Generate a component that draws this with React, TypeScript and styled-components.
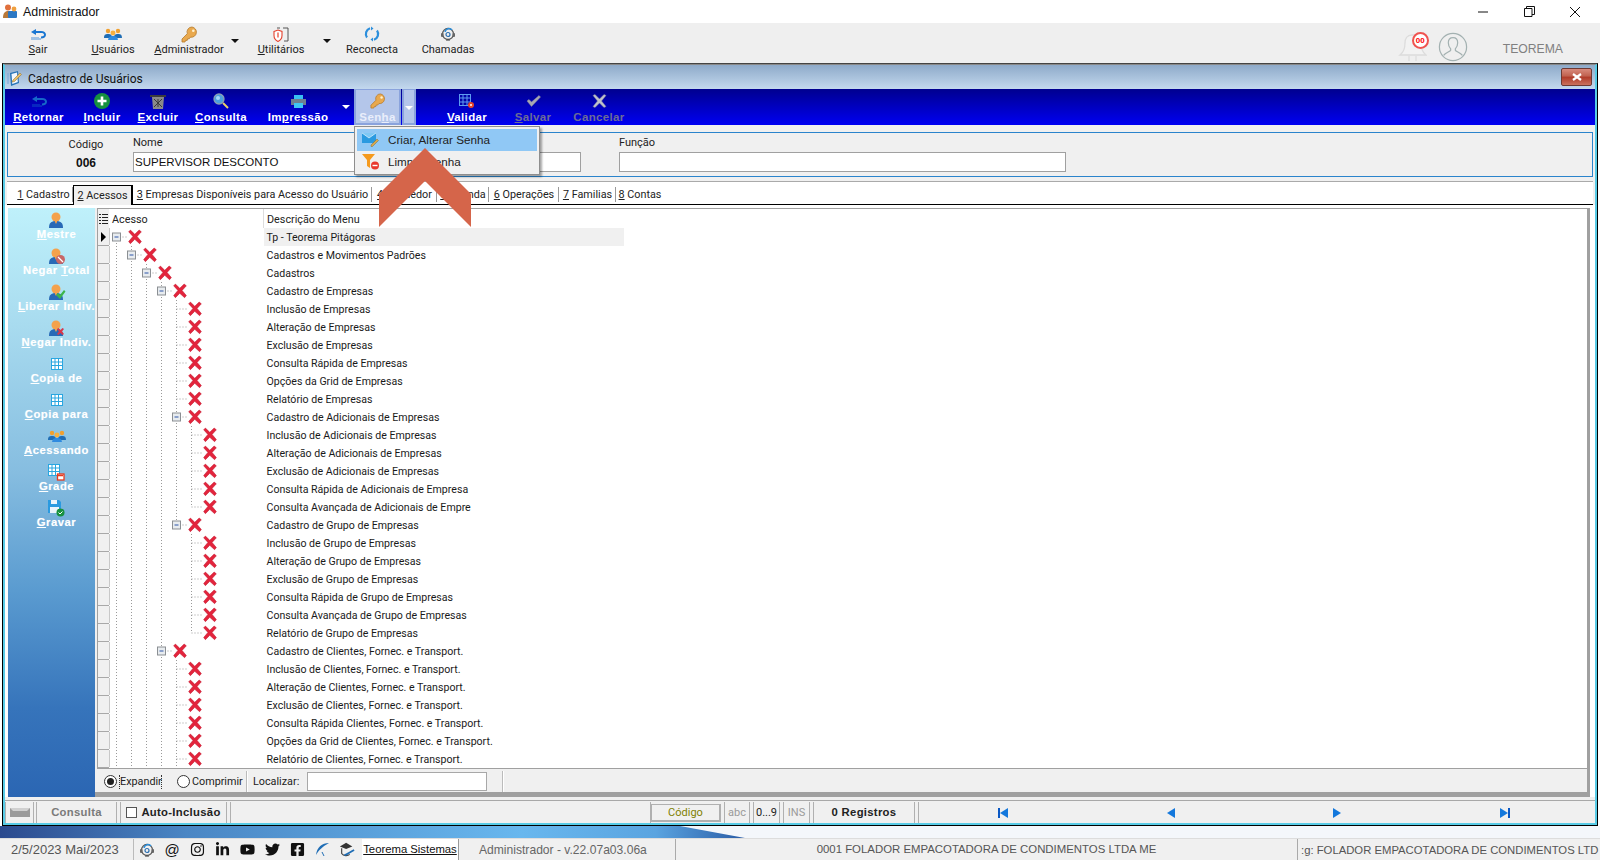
import React from "react";
import styled, { createGlobalStyle } from "styled-components";
import { FaInstagram, FaLinkedinIn, FaYoutube, FaTwitter, FaFacebookSquare } from "react-icons/fa";

const BOLD = `"Liberation Sans", Arial, sans-serif`;

const Global = createGlobalStyle`
  html, body { margin: 0; padding: 0; background: #fff; overflow: hidden; }
  * { box-sizing: border-box; }
  body { font-family: Roboto, "Liberation Sans", Arial, sans-serif; font-size: 11px; color: #111; }
`;

const Page = styled.div`
  position: relative; width: 1600px; height: 860px; overflow: hidden;
  display: flex; flex-direction: column; background: #fff;
`;
const TitleBar = styled.div`
  height: 23px; display: flex; align-items: center; padding-left: 2px; background: #fff; flex: none;
`;
const TitleText = styled.span`margin-left: 5px; font-size: 12.4px; color: #111; font-family: ${BOLD};`;
const WinControls = styled.div`margin-left: auto; display: flex; height: 23px; padding-right: 2px;`;
const WinControl = styled.div`
  width: 46px; display: flex; align-items: center; justify-content: center;
`;
const MenuBar = styled.div`
  height: 40px; flex: none; background: #efefef; display: flex; align-items: stretch;
`;
const MenuBtn = styled.div<{ $w: number }>`
  width: ${p => p.$w}px; display: flex; flex-direction: column; align-items: center;
  padding-top: 2px; font-size: 11px; color: #222; flex: none;
`;
const MenuIcon = styled.div`height: 18px; display: flex; align-items: center; justify-content: center;`;
const MenuLabel = styled.span`margin-top: -1px; line-height: 15px;`;
const Caret = styled.div<{ $w: number; $color?: string }>`
  width: ${p => p.$w}px; flex: none; display: flex; justify-content: center; padding-top: 16px;
  &::after {
    content: ""; width: 0; height: 0;
    border-left: 4px solid transparent; border-right: 4px solid transparent;
    border-top: 4px solid ${p => p.$color || "#111"};
  }
`;
const MenuRight = styled.div`
  margin-left: auto; display: flex; align-items: center; padding-top: 7px; color: #808080; font-size: 12.2px; font-family: ${BOLD};
`;
const BellWrap = styled.div`position: relative; width: 34px; height: 32px; margin-right: 7px;`;
const Badge = styled.div`
  position: absolute; left: 15px; top: 1px; width: 17px; height: 17px; border-radius: 50%;
  border: 2px solid #ef5350; background: #fff; color: #f00; font-size: 8px; font-weight: 700;
  display: flex; align-items: center; justify-content: center; letter-spacing: 0;
`;
const Teorema = styled.span`margin: 5px 37px 0 35px;`;

const Window = styled.div`
  margin: 0 2px; height: 763px; flex: none; display: flex; flex-direction: column;
  border: 1px solid #000; border-top: 1px solid #444; background: #f0f0f0; position: relative;
`;
const WindowInner = styled.div`
  flex: 1; display: flex; flex-direction: column; border: 2px solid #58cbe6; border-top: 1px solid #888;
  min-height: 0;
`;
const Caption = styled.div`
  height: 24px; flex: none; display: flex; align-items: center; padding: 3px 3px 0 2px;
  background: linear-gradient(#8eaac9, #c3d8ee); font-size: 12px; color: #111;
`;
const CaptionText = styled.span`margin-left: 5px;`;
const CloseBtn = styled.div`
  margin-left: auto; width: 31px; height: 18px; border-radius: 2px; border: 1px solid #6e3a34; margin-top: -3px;
  background: linear-gradient(#d88a7c 0, #c0604e 45%, #b03a28 50%, #c9705e 100%);
  display: flex; align-items: center; justify-content: center;
`;
const BlueBar = styled.div`
  height: 36px; flex: none; display: flex; background: linear-gradient(#00008f, #0000f2);
`;
const BlueBtn = styled.div<{ $w: number; $off?: boolean; $active?: boolean }>`
  width: ${p => p.$w}px; flex: none; display: flex; flex-direction: column; align-items: center;
  padding-top: 4px; font-family: ${BOLD}; font-weight: 700; font-size: 11.5px; letter-spacing: 0.35px;
  color: ${p => (p.$active ? "#e9eefb" : p.$off ? "#6c6c96" : "#fff")};
  ${p => p.$active && `background: #b4c6ea; border: 2px solid #8aa3dc; border-top-width:1px; padding-top:3px;`}
  white-space: nowrap;
`;
const BlueIcon = styled.div`height: 16px; display: flex; align-items: center; justify-content: center;`;
const BlueLabel = styled.span`line-height: 15px; margin-top: 1px;`;
const DropBtn = styled.div`
  width: 14px; margin-left: 1px; flex: none; background: #b4c6ea; border: 2px solid #8aa3dc;
  border-top-width: 1px; display: flex; justify-content: center; padding-top: 16px;
  &::after {
    content: ""; width: 0; height: 0;
    border-left: 4px solid transparent; border-right: 4px solid transparent; border-top: 4px solid #fff;
  }
`;
const Gap = styled.div<{ $w: number }>`width: ${p => p.$w}px; flex: none;`;
const Mn = styled.span`text-decoration: underline; text-underline-offset: 1px;`;

const FormPanel = styled.div`
  height: 45px; flex: none; margin: 7px 2px 4px 2px; border: 1px solid #2a84cc; background: #f0f0f0;
  display: flex; position: relative;
`;
const CodeCol = styled.div`
  width: 125px; flex: none; display: flex; flex-direction: column; align-items: center; padding: 3px 0 0 31px;
`;
const CodeLabel = styled.span`line-height: 15px; color: #222; margin-top: 1px;`;
const CodeValue = styled.span`font-family: ${BOLD}; font-weight: 700; font-size: 12px; line-height: 18px; color: #111; margin-top: 2px;`;
const Field = styled.div<{ $w: number; $ml?: number }>`
  width: ${p => p.$w}px; margin-left: ${p => p.$ml || 0}px; flex: none; display: flex; flex-direction: column;
  padding-top: 3px;
`;
const FieldLabel = styled.span`font-size: 11px; line-height: 14px; color: #222;`;
const FieldBox = styled.div`
  height: 20px; margin-top: 2px; border: 1px solid #a0a0a0; background: #fff; padding: 0 1px;
  line-height: 18px; font-size: 11.5px; font-family: ${BOLD}; white-space: nowrap; overflow: hidden; color: #111;
`;
const Tabs = styled.div`
  height: 24px; flex: none; border-top: 1px solid #aaa; background: #fff; margin: 0 2px;
  display: flex; align-items: stretch; border-bottom: 1px solid #000; padding-left: 7px; padding-top: 3px;
`;
const Tab = styled.div<{ $w: number; $active?: boolean; $sep?: boolean }>`
  width: ${p => p.$w}px; flex: none; white-space: nowrap; text-align: center; line-height: 20px; color: #222; font-size: 10.8px;
  ${p => p.$active && `border: 1px solid #000; border-width: 1px 2px 0 1px; background: #f0f0f0; margin-bottom: -1px;`}
  ${p => p.$sep && `position: relative; &::after { content: ""; position: absolute; right: 0; top: 2px; height: 15px; width: 1px; background: #999; }`}
`;
const Main = styled.div`
  height: 592px; flex: none; display: flex; padding: 3px 0 0 3px; background: #fff;
`;
const Sidebar = styled.div`
  width: 87px; flex: none; height: 589px; display: flex; flex-direction: column; padding: 4px 0 0 10px;
  background: linear-gradient(#bff1fb 0, #a8dbef 20%, #86bde0 45%, #5a9bd0 65%, #3674bb 85%, #2b66b3 100%);
`;
const SideBtn = styled.div`
  height: 36px; flex: none; display: flex; flex-direction: column; align-items: center;
  color: #fff; font-family: ${BOLD}; font-weight: 700; font-size: 11.3px; letter-spacing: 0.5px; white-space: nowrap;
  text-shadow: 0 0 1px rgba(255,255,255,.4);
`;
const SideIcon = styled.div`height: 16px; display: flex; align-items: center; justify-content: center;`;
const SideLabel = styled.span`line-height: 15px; margin-top: -1px;`;
const RightCol = styled.div`
  width: 1495px; flex: none; display: flex; flex-direction: column; height: 589px;
  border-right: 3px solid #a0a0a0; border-bottom: 5px solid #a0a0a0; background: #f0f0f0;
`;
const GridBox = styled.div`
  height: 561px; flex: none; margin-left: 2px; background: #fff; display: flex; flex-direction: column;
  border-top: 1px solid #a0a0a0; border-left: 1px solid #a0a0a0; border-bottom: 1px solid #a0a0a0; overflow: hidden;
`;
const GridHead = styled.div`height: 19px; flex: none; display: flex;`;
const HeadCorner = styled.div`
  width: 11px; flex: none; background: #f0f0f0; display: flex; align-items: center; justify-content: center;
`;
const HeadCell = styled.div<{ $w?: number }>`
  ${p => (p.$w ? `width:${p.$w}px;flex:none;` : "flex:1;")} padding-left: 3px; line-height: 21px; color: #222; font-size: 10.8px;
  border-right: ${p => (p.$w ? "1px solid #ddd" : "0")};
`;
const Row = styled.div`height: 18px; flex: none; display: flex;`;
const RowHead = styled.div`
  width: 11px; flex: none; background: #f0f0f0; border-bottom: 1px solid #a8a8a8; display: flex;
  align-items: center; justify-content: center; position: relative;
  &::after { content: ""; position: absolute; right: -1px; top: 0; bottom: 0; width: 1px; background: #c8c8c8; }
`;
const RowArrow = styled.div`
  width: 0; height: 0; border-top: 5px solid transparent; border-bottom: 5px solid transparent;
  border-left: 5px solid #000;
`;
const TreeCell = styled.div`width: 155px; flex: none; height: 18px;`;
const Desc = styled.div<{ $current?: boolean }>`
  width: 360px; flex: none; padding-left: 2.5px; line-height: 19px; white-space: nowrap; overflow: hidden; color: #1a1a1a; font-size: 10.6px;
  background: ${p => (p.$current ? "#f0f0f0" : "transparent")};
`;
const BottomBar = styled.div`
  height: 23px; flex: none; margin-left: 2px; padding-top: 2px; display: flex; align-items: center; font-size: 10.8px; color: #222;
`;
const Radio = styled.div<{ $on?: boolean; $ml: number }>`
  width: 13px; height: 13px; border-radius: 50%; border: 1px solid #333; background: #fff; margin-left: ${p => p.$ml}px;
  display: flex; align-items: center; justify-content: center; flex: none;
  &::after { content: ""; width: 7px; height: 7px; border-radius: 50%; background: ${p => (p.$on ? "#222" : "transparent")}; }
`;
const RadioText = styled.span<{ $focus?: boolean; $w: number }>`
  width: ${p => p.$w}px; flex: none; margin-left: 2px; line-height: 14px; white-space: nowrap; text-align: center;
  ${p => p.$focus && `border-left: 1px dotted #333; border-right: 1px dotted #333;`}
`;
const VSep = styled.div<{ $ml: number }>`margin-left: ${p => p.$ml}px; width: 2px; height: 21px; background: #fff; border-left: 1px solid #bbb; flex: none;`;
const FindLabel = styled.span`margin-left: 5px; width: 54px; flex: none;`;
const FindBox = styled.div`width: 180px; height: 19px; border: 1px solid #a8a8a8; background: #fff; flex: none;`;
const Status = styled.div`
  flex: 1; display: flex; align-items: stretch; margin-top: 3px; border-top: 1px solid #a8a8a8; padding-top: 1px;
  min-height: 0;
`;
const SBox = styled.div<{ $w: number; $ml?: number }>`
  width: ${p => p.$w}px; margin-left: ${p => p.$ml ?? 3}px; flex: none; display: flex; align-items: center; justify-content: center;
  border-left: 1px solid #b0b0b0; border-right: 1px solid #b0b0b0; font-size: 11px; white-space: nowrap; padding-bottom: 1px;
`;
const SText = styled.span<{ $color?: string; $bold?: boolean }>`
  color: ${p => p.$color || "#222"}; font-weight: ${p => (p.$bold ? 700 : 400)};
  ${p => p.$bold && `letter-spacing: .3px; font-family: ${BOLD}; font-size: 11.3px;`}
`;
const CodeBtn = styled.div`
  width: 70px; flex: none; height: 18px; align-self: center; border: 1px solid #b0b0b0;
  text-align: center; line-height: 16px; color: #808000; border-width: 1px 2px 2px 1px; font-size: 11px;
`;
const SmallCheck = styled.div`width: 11px; height: 11px; border: 1px solid #555; background: #fff; margin-right: 4px; flex: none;`;
const NavCell = styled.div`flex: 1; display: flex; justify-content: center; align-items: center;`;
const NavWrap = styled.div`flex: 1; margin: 0 6px 0 3px; display: flex; border-left: 1px solid #b0b0b0;`;

const Desktop = styled.div`height: 12px; flex: none; background: #f4f7fb; position: relative; overflow: hidden;`;
const DeskWave = styled.div`
  position: absolute; inset: 0; width: 745px;
  background: linear-gradient(90deg, #2b4a8e 0, #4a86c4 25%, #68b7ee 70%, #5aa4e0 88%, #2a5ca6 100%);
  clip-path: polygon(0 0, 680px 0, 745px 12px, 0 12px);
`;
const TaskBar = styled.div`
  height: 22px; flex: none; background: #f0f0f0; display: flex; align-items: center; color: #444;
  font-family: ${BOLD}; border-top: 1px solid #ddd; white-space: nowrap; overflow: hidden;
`;
const TaskDate = styled.span`margin-left: 11px; width: 122px; flex: none; color: #555; font-size: 13px;`;
const TaskIcons = styled.div`display: flex; align-items: center; width: 229px; flex: none; border-left: 1px solid #bbb; height: 22px; padding-left: 5px; gap: 9px;`;
const Ico = styled.div`width: 16px; height: 16px; display: flex; align-items: center; justify-content: center; color: #111; flex: none; font-size: 15px;`;
const TaskLink = styled.span`
  width: 97px; flex: none; font-size: 11.3px; color: #111; text-decoration: underline; text-align: center;
  background: #fff; border-right: 1px solid #999; line-height: 21px;
`;
const TaskAdmin = styled.span`margin-left: 20px; width: 196px; flex: none; color: #666; font-size: 12.1px;`;
const TaskCompany = styled.span`width: 623px; flex: none; text-align: center; border-left: 1px solid #aaa; border-right: 1px solid #aaa; line-height: 21px; color: #555; font-size: 11.4px;`;
const TaskSeg = styled.span`margin-left: 3px; color: #555; font-size: 11.3px;`;

const MenuPop = styled.div`
  position: absolute; left: 354px; top: 126px; width: 186px; height: 49px; background: #f0f0f0;
  border: 1px solid #8e8e8e; box-shadow: 2px 2px 2px rgba(0,0,0,.35); padding: 2px; z-index: 5;
  display: flex; flex-direction: column;
`;
const PopItem = styled.div<{ $sel?: boolean }>`
  height: 22px; flex: none; display: flex; align-items: center; font-size: 11.7px; color: #222; padding: 0 0 1px 5px;
  font-family: ${BOLD};
  background: ${p => (p.$sel ? "#90c8f5" : "transparent")};
`;
const PopIcon = styled.div`width: 26px; flex: none; display: flex; align-items: center;`;
const Chevron = styled.svg`position: absolute; left: 379px; top: 148px; z-index: 6;`;

/* ---------- icons ---------- */
const Logo = () => (
  <svg width="16" height="16" viewBox="0 0 16 16">
    <circle cx="6" cy="3.5" r="3" fill="#e0703c" /><path d="M1 14c0-5 2-7 5-7s4 2 4 3l-2 4z" fill="#b9793a" />
    <rect x="6" y="7" width="9" height="7" rx="1" fill="#2c78c4" /><circle cx="12" cy="5" r="2.4" fill="#f0a040" />
  </svg>
);
const Back = ({ c = "#1976d2" }: { c?: string }) => (
  <svg width="16" height="13" viewBox="0 0 16 13">
    <path d="M6 1 1 4l5 3V5h5c2 0 3 .6 3 1.8S13 8.5 11 8.5v2c3 0 5-1.400 5-3.700C16 4.500 14 3 11 3H6z" fill={c} />
    <path d="M2 9v3M4 9v3M6 9v3M8 9v3M10 10v2" stroke={c} strokeWidth="1" opacity=".75" />
  </svg>
);
const Users = ({ w = 18 }: { w?: number }) => (
  <svg width={w} height={w * 0.72} viewBox="0 0 18 13">
    <circle cx="4" cy="3" r="2.200" fill="#f0a030" /><circle cx="14" cy="3" r="2.200" fill="#f0a030" />
    <path d="M0 10c0-3 1-4 4-4s4 1 4 4zM10 10c0-3 1-4 4-4s4 1 4 4z" fill="#1f6db5" />
    <circle cx="9" cy="5" r="2.500" fill="#f6b040" /><path d="M4 13c0-4 2-5 5-5s5 1 5 5z" fill="#2f8be0" />
  </svg>
);
const Key = ({ s = 17 }: { s?: number }) => (
  <svg width={s} height={s} viewBox="0 0 17 17">
    <path d="M11 1a5 5 0 0 0-4.700 6.700L1 13v3h3l.6-1.600h1.600l.4-1.600h1.600l1.300-1.600A5 5 0 1 0 11 1z" fill="#e9a94e" stroke="#b57a2a" strokeWidth=".8" />
    <circle cx="12.300" cy="4.700" r="1.300" fill="#fff2d0" />
  </svg>
);
const Shield = () => (
  <svg width="18" height="15" viewBox="0 0 18 15">
    <path d="M2 4.500 6 3l4 1.500v4C10 11.500 8 13.500 6 14.500 4 13.500 2 11.500 2 8.500z" fill="#fff" stroke="#e5402c" strokeWidth="1.100" />
    <path d="M6 5.500v5" stroke="#e5402c" strokeWidth="1.200" />
    <path d="M11 1h5v13h-4M5 1h3" fill="none" stroke="#555" strokeWidth="1" />
  </svg>
);
const Reload = () => (
  <svg width="16" height="16" viewBox="0 0 16 16" fill="none" stroke="#2c8fdc" strokeWidth="2.200">
    <path d="M3 11.500A6 6 0 0 1 6 2.300" /><path d="M13 4.500A6 6 0 0 1 10 13.700" />
    <path d="M7 .5v4L9.500 2.500zM9 15.500v-4L6.500 13.500z" fill="#2c8fdc" stroke="none" />
  </svg>
);
const Headset = () => (
  <svg width="16" height="16" viewBox="0 0 16 16" fill="none">
    <circle cx="8" cy="8" r="5.500" stroke="#555" strokeWidth="1.300" />
    <rect x="1" y="7" width="2.500" height="4" rx="1" fill="#666" /><rect x="12.500" y="7" width="2.500" height="4" rx="1" fill="#666" />
    <path d="M5 6a4 4 0 0 1 7-2" stroke="#2c8fdc" strokeWidth="1.500" /><circle cx="8" cy="8.500" r="2" stroke="#2c6fb0" strokeWidth="1.200" />
    <path d="M6 14h4" stroke="#555" strokeWidth="1.200" />
  </svg>
);
const Bell = () => (
  <svg width="30" height="32" viewBox="0 0 30 32" fill="#f2f2f2" stroke="#dcdcdc" strokeWidth="1.300">
    <path d="M14 4c-5 0-7 4-7 8 0 6-1 9-5 12h26c-4-3-5-6-5-12 0-4-2-8-7-8z" transform="translate(1 0)" />
    <path d="M12 25v5M19 25v5" fill="none" />
  </svg>
);
const Avatar = () => (
  <svg width="30" height="30" viewBox="0 0 32 32" fill="none" stroke="#a3b1b1" strokeWidth="1.300">
    <circle cx="16" cy="16" r="14.500" />
    <path d="M16 6c-3.500 0-5 2.500-5 5.500 0 3 1 5 2.500 6.500v1.500C13 21 8 22 6 25M16 6c3.500 0 5 2.500 5 5.500 0 3-1 5-2.500 6.500v1.500c.5 1.500 5.500 2.500 7.500 5.500" />
  </svg>
);
const DocIcon = () => (
  <svg width="16" height="17" viewBox="0 0 16 17">
    <path d="M3 3l8-2 1 12-8 3z" fill="#2874b8" /><path d="M4.500 4l5.500-1.500.8 9.500-5.500 2z" fill="#f3f8ff" />
    <path d="M6 10l7-7 1.500 1.500-7 7L5 12z" fill="#e9c06a" stroke="#8a6b2e" strokeWidth=".5" /><path d="M1 3v11" stroke="#78a8d8" />
  </svg>
);
const Plus = () => (
  <svg width="16" height="16" viewBox="0 0 16 16">
    <circle cx="8" cy="8" r="8" fill="#16913f" /><path d="M8 3.500v9M3.500 8h9" stroke="#fff" strokeWidth="2.600" />
  </svg>
);
const Trash = () => (
  <svg width="16" height="15" viewBox="0 0 16 15">
    <path d="M0 1h16v2H0z" fill="#3c3c3c" /><path d="M2 3h12l-1 12H3z" fill="#8a8a8a" />
    <path d="M4 5l8 8M12 5l-8 8M8 5v8" stroke="#3a3a3a" strokeWidth="1" />
  </svg>
);
const Lens = () => (
  <svg width="16" height="16" viewBox="0 0 16 16">
    <path d="M10 10l5 5" stroke="#e8d06a" strokeWidth="2" />
    <circle cx="6" cy="6" r="5" fill="#4c9fe0" stroke="#8aa0b4" strokeWidth="1.300" /><circle cx="5" cy="5" r="2" fill="#a6d6fa" />
  </svg>
);
const Printer = () => (
  <svg width="15" height="13" viewBox="0 0 15 13">
    <rect x="3" y="0" width="9" height="4" fill="#39bff2" /><rect x="0" y="4" width="15" height="6" fill="#6f8090" />
    <rect x="3" y="8" width="9" height="5" fill="#3fc6f5" />
  </svg>
);
const GridIcon = ({ c = "#29a6e0", s = 12 }: { c?: string; s?: number }) => (
  <svg width={s} height={s} viewBox="0 0 12 12">
    <rect width="12" height="12" fill={c} />
    <path d="M1 1h2.500v2.500H1zM4.500 1H7v2.500H4.500zM8 1h3v2.500H8zM1 4.500h2.500V7H1zM4.500 4.500H7V7H4.500zM8 4.500h3V7H8zM1 8h2.500v3H1zM4.500 8H7v3H4.500zM8 8h3v3H8z" fill="#fff" />
  </svg>
);
const ValidIcon = () => (
  <svg width="16" height="15" viewBox="0 0 16 15">
    <rect x=".5" y=".5" width="11" height="11" fill="#0000a8" stroke="#5e9cf0" />
    <path d="M4 .5v11M8 .5v11M.5 4h11M.5 8h11" stroke="#5e9cf0" />
    <circle cx="12" cy="11" r="3" fill="#e8462a" /><circle cx="12" cy="11" r="1" fill="#fff" />
  </svg>
);
const Check = () => (
  <svg width="15" height="12" viewBox="0 0 15 12"><path d="M1 6l2-1.500 2.500 2.500L13 .5l1.500 1.500-9 9.500z" fill="#a8a8b4" stroke="#8a8a98" strokeWidth=".5" /></svg>
);
const GrayX = () => (
  <svg width="15" height="14" viewBox="0 0 15 14"><path d="M1 1.500l2-1 4.500 4.500L12 .5l2 1L9.500 7l4.500 5.500-2 1L7.500 9 3 13.500l-2-1L5.500 7z" fill="#bfc2cc" stroke="#8a8a98" strokeWidth=".5" /></svg>
);
const Person = ({ badge }: { badge?: "no" | "ok" | "x" }) => (
  <svg width="18" height="17" viewBox="0 0 18 17">
    <circle cx="8" cy="5" r="4.500" fill="#f4a24c" />
    <path d="M1 16c0-5 2-7 7-7s7 2 7 7z" fill="#2769b6" />
    <path d="M6.500 9h3l-1.500 3z" fill="#f4a24c" />
    {badge === "no" && <g><circle cx="12.500" cy="11.500" r="4.500" fill="#c86666" /><path d="M10 9l5 5" stroke="#fff" strokeWidth="1.300" /></g>}
    {badge === "ok" && <path d="M8 11l2-2 2 2 4-5 1.500 1.500-5.500 7.500z" fill="#3cb54a" />}
    {badge === "x" && <path d="M9 9l1.500-1 2 2 2-2L16 9l-2 2.500 2 2.500-1.500 1-2-2-2 2L9 14l2-2.500z" fill="#d8354a" />}
  </svg>
);
const GridBadge = () => (
  <svg width="17" height="17" viewBox="0 0 17 17">
    <rect width="12" height="12" fill="#29a6e0" />
    <path d="M1 1h2.500v2.500H1zM4.500 1H7v2.500H4.500zM8 1h3v2.500H8zM1 4.500h2.500V7H1zM4.500 4.500H7V7H4.500zM8 4.500h3V7H8zM1 8h2.500v3H1zM4.500 8H7v3H4.500zM8 8h3v3H8z" fill="#fff" />
    <rect x="9.500" y="10" width="6.500" height="6" fill="#fff" stroke="#e5391e" strokeWidth="1.300" /><path d="M10 11.500h5" stroke="#e5391e" strokeWidth="1.500" />
  </svg>
);
const Disk = () => (
  <svg width="17" height="17" viewBox="0 0 17 17">
    <path d="M0 0h11l2 2v11H0z" fill="#2a9ae0" /><rect x="3" y="0" width="6" height="4" fill="#eaf4fb" /><rect x="2" y="7" width="9" height="6" fill="#eaf4fb" />
    <circle cx="12.500" cy="12.500" r="4" fill="#16913f" /><path d="M10.500 12.500l1.500 1.500 2.500-2.500" stroke="#fff" strokeWidth="1" fill="none" />
  </svg>
);
const RedX = () => (
  <path transform="scale(1.15)" d="M-5.500-4.500-4-6-.2-2.300 3.600-6 5.500-4.500 1.800-.5 5.500 4 4 5.800-.2 2 -4 5.800-5.500 4-1.800-.5z" fill="#e3243c" stroke="#c3182f" strokeWidth=".5" />
);
const Mail = () => (
  <svg width="18" height="15" viewBox="0 0 18 15">
    <rect x="0" y="1" width="14" height="10" fill="#2a9ae0" /><path d="M0 1l7 5 7-5" fill="#7fc8f4" stroke="#fff" strokeWidth=".6" />
    <path d="M9 13l6-6 1.500 1.500-6 6H9z" fill="#d9a84a" stroke="#6b5a2a" strokeWidth=".4" />
  </svg>
);
const Funnel = () => (
  <svg width="18" height="16" viewBox="0 0 18 16">
    <path d="M0 0h13L8 6v8l-3-2V6z" fill="#f59a1d" />
    <circle cx="13" cy="11.500" r="4" fill="#e9392f" /><path d="M10.500 11.500h5" stroke="#fff" strokeWidth="1.400" />
  </svg>
);
const NavArrow = ({ dir, bar }: { dir: "l" | "r"; bar?: boolean }) => (
  <svg width="12" height="10" viewBox="0 0 12 10">
    {dir === "l" ? (
      <g>{bar && <rect x="1" y="0" width="2" height="10" fill="#0a58c4" />}<path d="M11 0v10L3 5z" fill="#1478dc" /></g>
    ) : (
      <g><path d="M1 0v10l8-5z" fill="#1478dc" />{bar && <rect x="9" y="0" width="2" height="10" fill="#0a58c4" />}</g>
    )}
  </svg>
);
const ListIcon = () => (
  <svg width="9" height="10" viewBox="0 0 9 10" fill="#222">
    <path d="M0 0h2v1H0zM3 0h6v1H3zM0 3h2v1H0zM3 3h6v1H3zM0 6h2v1H0zM3 6h6v1H3zM0 9h2v1H0zM3 9h6v1H3z" />
  </svg>
);

/* ---------- tree ---------- */
const rows: [number, string, boolean?][] = [
  [0, "Tp - Teorema Pitágoras", true],
  [1, "Cadastros e Movimentos Padrões", true],
  [2, "Cadastros", true],
  [3, "Cadastro de Empresas", true],
  [4, "Inclusão de Empresas"],
  [4, "Alteração de Empresas"],
  [4, "Exclusão de Empresas"],
  [4, "Consulta Rápida de Empresas"],
  [4, "Opções da Grid de Empresas"],
  [4, "Relatório de Empresas"],
  [4, "Cadastro de Adicionais de Empresas", true],
  [5, "Inclusão de Adicionais de Empresas"],
  [5, "Alteração de Adicionais de Empresas"],
  [5, "Exclusão de Adicionais de Empresas"],
  [5, "Consulta Rápida de Adicionais de Empresa"],
  [5, "Consulta Avançada de Adicionais de Empre"],
  [4, "Cadastro de Grupo de Empresas", true],
  [5, "Inclusão de Grupo de Empresas"],
  [5, "Alteração de Grupo de Empresas"],
  [5, "Exclusão de Grupo de Empresas"],
  [5, "Consulta Rápida de Grupo de Empresas"],
  [5, "Consulta Avançada de Grupo de Empresas"],
  [5, "Relatório de Grupo de Empresas"],
  [3, "Cadastro de Clientes, Fornec. e Transport.", true],
  [4, "Inclusão de Clientes, Fornec. e Transport."],
  [4, "Alteração de Clientes, Fornec. e Transport."],
  [4, "Exclusão de Clientes, Fornec. e Transport."],
  [4, "Consulta Rápida Clientes, Fornec. e Transport."],
  [4, "Opções da Grid de Clientes, Fornec. e Transport."],
  [4, "Relatório de Clientes, Fornec. e Transport."],
];
const hasLater = (i: number, lvl: number) => {
  if (lvl <= 3) return true;
  for (let j = i + 1; j < rows.length; j++) {
    if (rows[j][0] === lvl) return true;
    if (rows[j][0] < lvl) return false;
  }
  return lvl <= 4;
};
const dot = { stroke: "#9a9a9a", strokeWidth: 1, strokeDasharray: "1 2", fill: "none" };

const TreeRow = ({ i, level, exp }: { i: number; level: number; exp?: boolean }) => {
  const lx = (l: number) => 7.5 + 15 * l;
  const verts: React.ReactNode[] = [];
  for (let l = 0; l < level; l++) {
    if (hasLater(i, l)) verts.push(<line key={l} x1={lx(l)} x2={lx(l)} y1={0} y2={18} {...dot} />);
  }
  const x = lx(level);
  return (
    <svg width="155" height="18" viewBox="0 0 155 18">
      {verts}
      <line x1={x} x2={x} y1={i === 0 ? 9 : 0} y2={hasLater(i, level) ? 18 : 9} {...dot} />
      <line x1={x} x2={x + 12} y1={9} y2={9} {...dot} />
      {exp && (
        <g>
          <rect x={x - 4} y={5} width={8} height={8} fill="#e8ecef" stroke="#8b8f93" />
          <path d={`M${x - 2} 9h4`} stroke="#2c54a8" strokeWidth="1" />
        </g>
      )}
      <g transform={`translate(${x + 18.5} 9)`}><RedX /></g>
    </svg>
  );
};

const side: [React.ReactNode, string, string][] = [
  [<Person />, "M", "estre"],
  [<Person badge="no" />, "", "Negar |T|otal"],
  [<Person badge="ok" />, "L", "iberar Indiv."],
  [<Person badge="x" />, "N", "egar Indiv."],
  [<GridIcon />, "C", "opia de"],
  [<GridIcon />, "C", "opia para"],
  [<Users />, "A", "cessando"],
  [<GridBadge />, "G", "rade"],
  [<Disk />, "G", "ravar"],
];

export default function App() {
  return (
    <Page>
      <Global />
      <TitleBar>
        <Logo />
        <TitleText>Administrador</TitleText>
        <WinControls>
          <WinControl><svg width="11" height="11" viewBox="0 0 11 11"><path d="M0 6h10" stroke="#111" /></svg></WinControl>
          <WinControl><svg width="11" height="11" viewBox="0 0 11 11" fill="none" stroke="#111"><path d="M.5 2.500h7.500v8H.5zM2.500 2.500V.5h8v8H8" /></svg></WinControl>
          <WinControl><svg width="12" height="12" viewBox="0 0 12 12" stroke="#111"><path d="M1 1l10 10M11 1 1 11" /></svg></WinControl>
        </WinControls>
      </TitleBar>
      <MenuBar>
        <MenuBtn $w={76}><MenuIcon><Back /></MenuIcon><MenuLabel><Mn>S</Mn>air</MenuLabel></MenuBtn>
        <MenuBtn $w={74}><MenuIcon><Users /></MenuIcon><MenuLabel><Mn>U</Mn>suários</MenuLabel></MenuBtn>
        <MenuBtn $w={78}><MenuIcon><Key /></MenuIcon><MenuLabel><Mn>A</Mn>dministrador</MenuLabel></MenuBtn>
        <Caret $w={14} />
        <MenuBtn $w={78}><MenuIcon><Shield /></MenuIcon><MenuLabel><Mn>U</Mn>tilitários</MenuLabel></MenuBtn>
        <Caret $w={14} />
        <MenuBtn $w={76}><MenuIcon><Reload /></MenuIcon><MenuLabel>Reconecta</MenuLabel></MenuBtn>
        <MenuBtn $w={76}><MenuIcon><Headset /></MenuIcon><MenuLabel>Chamadas</MenuLabel></MenuBtn>
        <MenuRight>
          <BellWrap><Bell /><Badge>00</Badge></BellWrap>
          <Avatar />
          <Teorema>TEOREMA</Teorema>
        </MenuRight>
      </MenuBar>
      <Window>
        <WindowInner>
          <Caption>
            <DocIcon />
            <CaptionText>Cadastro de Usuários</CaptionText>
            <CloseBtn><svg width="10" height="8" viewBox="0 0 10 8"><path d="M1 1l8 6M9 1 1 7" stroke="#fff" strokeWidth="2.200" /></svg></CloseBtn>
          </Caption>
          <BlueBar>
            <BlueBtn $w={67}><BlueIcon><Back c="#1668c8" /></BlueIcon><BlueLabel><Mn>R</Mn>etornar</BlueLabel></BlueBtn>
            <BlueBtn $w={60}><BlueIcon><Plus /></BlueIcon><BlueLabel><Mn>I</Mn>ncluir</BlueLabel></BlueBtn>
            <BlueBtn $w={52}><BlueIcon><Trash /></BlueIcon><BlueLabel><Mn>E</Mn>xcluir</BlueLabel></BlueBtn>
            <BlueBtn $w={74}><BlueIcon><Lens /></BlueIcon><BlueLabel><Mn>C</Mn>onsulta</BlueLabel></BlueBtn>
            <BlueBtn $w={80}><BlueIcon><Printer /></BlueIcon><BlueLabel>Im<Mn>p</Mn>ressão</BlueLabel></BlueBtn>
            <Caret $w={16} $color="#fff" />
            <BlueBtn $w={47} $active><BlueIcon><Key s={16} /></BlueIcon><BlueLabel>Sen<Mn>h</Mn>a</BlueLabel></BlueBtn>
            <DropBtn />
            <Gap $w={13} />
            <BlueBtn $w={76}><BlueIcon><ValidIcon /></BlueIcon><BlueLabel><Mn>V</Mn>alidar</BlueLabel></BlueBtn>
            <BlueBtn $w={56} $off><BlueIcon><Check /></BlueIcon><BlueLabel><Mn>S</Mn>alvar</BlueLabel></BlueBtn>
            <BlueBtn $w={76} $off><BlueIcon><GrayX /></BlueIcon><BlueLabel>Cancelar</BlueLabel></BlueBtn>
          </BlueBar>
          <FormPanel>
            <CodeCol><CodeLabel>Código</CodeLabel><CodeValue>006</CodeValue></CodeCol>
            <Field $w={448}><FieldLabel>Nome</FieldLabel><FieldBox>SUPERVISOR DESCONTO</FieldBox></Field>
            <Field $w={447} $ml={38}><FieldLabel>Função</FieldLabel><FieldBox /></Field>
          </FormPanel>
          <Tabs>
            <Tab $w={59} $sep><Mn>1</Mn> Cadastro</Tab>
            <Tab $w={60} $active><Mn>2</Mn> Acessos</Tab>
            <Tab $w={239} $sep><Mn>3</Mn> Empresas Disponíveis para Acesso do Usuário</Tab>
            <Tab $w={65} $sep><Mn>4</Mn> Vendedor</Tab>
            <Tab $w={52} $sep><Mn>5</Mn> Agenda</Tab>
            <Tab $w={70} $sep><Mn>6</Mn> Operações</Tab>
            <Tab $w={57} $sep><Mn>7</Mn> Familias</Tab>
            <Tab $w={48}><Mn>8</Mn> Contas</Tab>
          </Tabs>
          <Main>
            <Sidebar>
              {side.map(([icon, m, rest], i) => {
                const parts = rest.split("|");
                return (
                  <SideBtn key={i}>
                    <SideIcon>{icon}</SideIcon>
                    <SideLabel>
                      {m ? <Mn>{m}</Mn> : null}
                      {parts.length === 3 ? <>{parts[0]}<Mn>{parts[1]}</Mn>{parts[2]}</> : rest}
                    </SideLabel>
                  </SideBtn>
                );
              })}
            </Sidebar>
            <RightCol>
              <GridBox>
                <GridHead>
                  <HeadCorner><ListIcon /></HeadCorner>
                  <HeadCell $w={155}>Acesso</HeadCell>
                  <HeadCell>Descrição do Menu</HeadCell>
                </GridHead>
                {rows.map(([lvl, text, exp], i) => (
                  <Row key={i}>
                    <RowHead>{i === 0 && <RowArrow />}</RowHead>
                    <TreeCell><TreeRow i={i} level={lvl} exp={exp} /></TreeCell>
                    <Desc $current={i === 0}>{text}</Desc>
                  </Row>
                ))}
              </GridBox>
              <BottomBar>
                <Radio $on $ml={7} />
                <RadioText $focus $w={43}>Expandir</RadioText>
                <Radio $ml={15} />
                <RadioText $w={46}>Comprimir</RadioText>
                <VSep $ml={8} />
                <FindLabel>Localizar:</FindLabel>
                <FindBox />
                <VSep $ml={15} />
              </BottomBar>
            </RightCol>
          </Main>
          <Status>
            <SBox $w={29} $ml={0}>
              <svg width="20" height="9" viewBox="0 0 20 9"><rect width="20" height="9" fill="#9a9a9a" /><path d="M0 0h20L17 3H3z" fill="#d0d0d0" /></svg>
            </SBox>
            <SBox $w={81} $ml={2}><SText $color="#7a7a7a" $bold>Consulta</SText></SBox>
            <SBox $w={107}><SmallCheck /><SText $bold>Auto-Inclusão</SText></SBox>
            <SBox $w={421} $ml={3} />
            <CodeBtn>Código</CodeBtn>
            <SBox $w={26}><SText $color="#9a9a9a">abc</SText></SBox>
            <SBox $w={27}><SText>0...9</SText></SBox>
            <SBox $w={27}><SText $color="#9a9a9a">INS</SText></SBox>
            <SBox $w={102}><SText $bold>0 Registros</SText></SBox>
            <NavWrap>
              <NavCell><NavArrow dir="l" bar /></NavCell>
              <NavCell><NavArrow dir="l" /></NavCell>
              <NavCell><NavArrow dir="r" /></NavCell>
              <NavCell><NavArrow dir="r" bar /></NavCell>
            </NavWrap>
          </Status>
        </WindowInner>
      </Window>
      <Desktop><DeskWave /></Desktop>
      <TaskBar>
        <TaskDate>2/5/2023 Mai/2023</TaskDate>
        <TaskIcons>
          <Ico><Headset /></Ico>
          <Ico>@</Ico>
          <Ico><FaInstagram /></Ico>
          <Ico><FaLinkedinIn /></Ico>
          <Ico><FaYoutube /></Ico>
          <Ico><FaTwitter /></Ico>
          <Ico><FaFacebookSquare /></Ico>
          <Ico><svg width="16" height="16" viewBox="0 0 16 16"><path d="M15 1C8 1 3 5 2 13 5 8 8 5 15 1z" fill="#1f6db5" /><path d="M8 10l2 4" stroke="#1f6db5" /></svg></Ico>
          <Ico><svg width="18" height="17" viewBox="0 0 18 17" fill="none"><path d="M1 5l7-4 7 4-7 3z" fill="#333" /><path d="M3 7v6c2 3 7 3 9 1" stroke="#444" strokeWidth="1.300" /><path d="M6 15c3-1 7-4 11-6" stroke="#1f6db5" strokeWidth="2" /></svg></Ico>
        </TaskIcons>
        <TaskLink>Teorema Sistemas</TaskLink>
        <TaskAdmin>Administrador - v.22.07a03.06a</TaskAdmin>
        <TaskCompany>0001 FOLADOR EMPACOTADORA DE CONDIMENTOS LTDA ME</TaskCompany>
        <TaskSeg>:g: FOLADOR EMPACOTADORA DE CONDIMENTOS LTD</TaskSeg>
      </TaskBar>
      <MenuPop>
        <PopItem $sel><PopIcon><Mail /></PopIcon>Criar, Alterar Senha</PopItem>
        <PopItem><PopIcon><Funnel /></PopIcon>Limpar Senha</PopItem>
      </MenuPop>
      <Chevron width="92" height="79" viewBox="0 0 92 79">
        <path d="M46 0 92 46v33L46 33 0 79V46z" fill="#d5654a" />
      </Chevron>
    </Page>
  );
}
